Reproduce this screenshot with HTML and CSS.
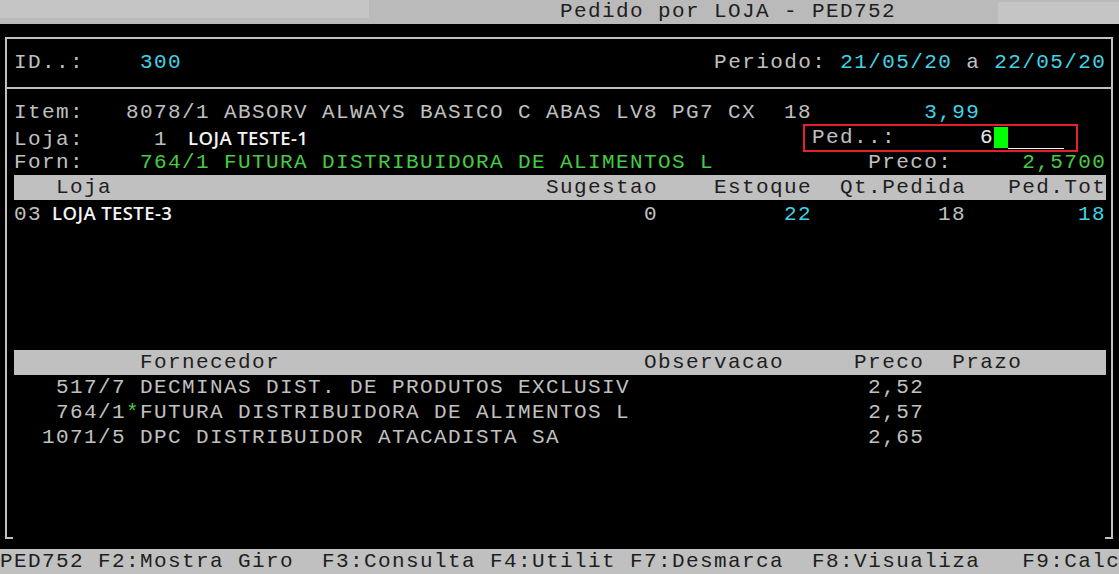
FILE: index.html
```html
<!DOCTYPE html>
<html lang="pt-BR">
<head>
    <meta charset="UTF-8">
    <meta name="viewport" content="width=device-width, initial-scale=1.0">
    <title>Pedido por LOJA - PED752</title>
    <link rel="stylesheet" href="styles.css">
</head>
<body>
    <!-- barra de titulo -->
    <header class="titlebar">
        <div class="tb-light tb-left"></div>
        <div class="tb-title">Pedido por LOJA - PED752</div>
        <div class="tb-light tb-right"></div>
    </header>

    <section class="frame">
        <div class="line">ID..:    <span class="cy">300</span>                                      Periodo: <span class="cy">21/05/20</span> a <span class="cy">22/05/20</span></div>

        <div class="sep"></div>

        <div class="line">Item:   8078/1 ABSORV ALWAYS BASICO C ABAS LV8 PG7 CX  18        <span class="cy">3,99</span></div>
        <div class="line">Loja:     1 <span class="sans sans-loja">LOJA TESTE-1</span><span class="ped">Ped..:      <span class="wh">6</span><span class="cursor"> </span><span class="under">    </span></span></div>
        <div class="line">Forn:    <span class="gr">764/1 FUTURA DISTRIBUIDORA DE ALIMENTOS L</span>           Preco:     <span class="gr">2,5700</span></div>
        <div class="line head">   Loja                               Sugestao    Estoque  Qt.Pedida   Ped.Tot</div>
        <div class="line">03<span class="sans sans-row">LOJA TESTE-3</span>0         <span class="cy">22</span>         18        <span class="cy">18</span></div>

        <div class="gap"></div>

        <div class="line head">         Fornecedor                          Observacao     Preco  Prazo      </div>
        <div class="line">   517/7 DECMINAS DIST. DE PRODUTOS EXCLUSIV                 2,52</div>
        <div class="line">   764/1<span class="gr">*</span>FUTURA DISTRIBUIDORA DE ALIMENTOS L                 2,57</div>
        <div class="line">  1071/5 DPC DISTRIBUIDOR ATACADISTA SA                      2,65</div>
    </section>

    <!-- teclas de funcao -->
    <footer class="fkeys">PED752 F2:Mostra Giro  F3:Consulta F4:Utilit F7:Desmarca  F8:Visualiza   F9:Calc</footer>
</body>
</html>
```

FILE: styles.css
```css
* {
    padding: 0;
    margin: 0;
    box-sizing: border-box;
}
html, body {
    height: 100%;
}
body {
    background-color: #000;
    color: #c0c0c0;
    font-family: "Liberation Mono", "Courier New", monospace;
    font-size: 21px;
    letter-spacing: 1.4px;
    line-height: 25px;
    display: flex;
    flex-direction: column;
    overflow: hidden;
}
.titlebar {
    height: 24px;
    background-color: #bababa;
    color: #1e1e1e;
    display: flex;
    white-space: pre;
}
.tb-light {
    background-color: #c5c5c5;
}
.tb-left {
    width: 369px;
    height: 18px;
}
.tb-title {
    margin-left: 191px;
    line-height: 24px;
    width: 336px;
}
.tb-right {
    margin-left: auto;
    margin-top: 2px;
    width: 121px;
    height: 22px;
}
.frame {
    position: relative;
    height: 502px;
    margin: 13px 6px 0 5px;
    border: 2px solid #c0c0c0;
    border-bottom: 0;
    padding-top: 11px;
}
/* cantos de baixo da moldura */
.frame::before,
.frame::after {
    content: "";
    position: absolute;
    bottom: 0;
    width: 8px;
    height: 2px;
    background-color: #c0c0c0;
}
.frame::before {
    left: -2px;
}
.frame::after {
    right: -2px;
}
.line {
    height: 25px;
    padding-left: 7px;
    white-space: pre;
}
.sep {
    height: 2px;
    margin: 12px 0 11px 0;
    background-color: #c0c0c0;
}
.gap {
    height: 125px;
}
.head {
    margin-left: 7px;
    padding-left: 0;
    width: 1092px;
    background-color: #c0c0c0;
    color: #1e1e1e;
}
.cy {
    color: #3fd3e5;
}
.gr {
    color: #45cc45;
}
.wh {
    color: #e8e8e8;
}
.sans {
    display: inline-block;
    font-family: "Open Sans", "Noto Sans", sans-serif;
    font-weight: 600;
    font-size: 18.5px;
    letter-spacing: 0.4px;
    line-height: 25px;
    color: #f4f4f4;
}
.sans-loja {
    width: 630px;
    padding-left: 6px;
}
.sans-row {
    width: 602px;
    padding-left: 10px;
}
.ped {
    position: relative;
    display: inline-block;
    vertical-align: top;
    height: 25px;
}
.ped::after {
    content: "";
    position: absolute;
    left: -9px;
    right: -14px;
    top: -1px;
    bottom: -2px;
    border: 2px solid #e3202c;
}
.cursor {
    display: inline-block;
    vertical-align: top;
    width: 14px;
    height: 21px;
    margin-top: 2px;
    background-color: #00ff00;
}
.under {
    display: inline-block;
    vertical-align: top;
    height: 24px;
    border-bottom: 1px solid #f0f0f0;
}
.fkeys {
    margin-top: auto;
    height: 25px;
    background-color: #c0c0c0;
    color: #1e1e1e;
    white-space: pre;
}
```
